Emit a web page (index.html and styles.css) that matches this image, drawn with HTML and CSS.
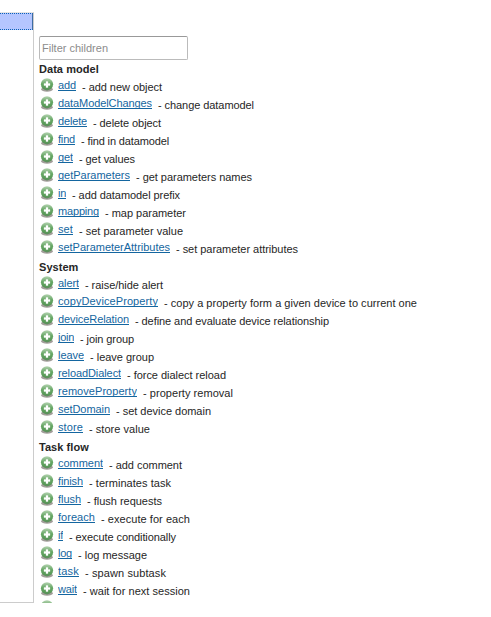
FILE: index.html
```
<!DOCTYPE html>
<html lang="en">
<head>
<meta charset="utf-8">
<title>Children</title>
<link rel="stylesheet" href="styles.css">
</head>
<body>
<svg class="defs" aria-hidden="true">
  <defs>
    <linearGradient id="ball" x1="0" y1="0" x2="0" y2="1">
      <stop offset="0" stop-color="#b4d3b1"/>
      <stop offset="0.45" stop-color="#68a866"/>
      <stop offset="0.8" stop-color="#5a9a59"/>
      <stop offset="1" stop-color="#5c8c5d"/>
    </linearGradient>
    <symbol id="plus" viewBox="0 0 14 15">
      <ellipse cx="7" cy="11.3" rx="5.8" ry="2.4" fill="#625b55" opacity="0.6"/>
      <circle cx="7" cy="6.3" r="6.1" fill="url(#ball)"/>
      <path d="M6 3.500h2v2h2v2H8v2H6v-2H4v-2h2z" fill="#fff" stroke="#fff" stroke-width="0.300"/>
    </symbol>
  </defs>
</svg>
<div class="layout">
  <div class="tree"><div class="selected"></div></div>
  <div class="children">
    <input class="filter" type="text" placeholder="Filter children">
    <div id="list"></div>
  </div>
</div>
<script src="list.js"></script>
</body>
</html>
```
FILE: styles.css
```
body {
  margin: 0;
  background: #fff;
  color: #262626;
  font: 11px/18px "Liberation Sans", Arial, sans-serif;
}
.defs {
  display: block;
  width: 0;
  height: 0;
}
.layout {
  display: flex;
  height: 591px;
  margin-top: 12px;
  overflow: hidden;
}
.tree {
  box-sizing: border-box;
  flex: none;
  width: 34px;
  border: 1px solid #ccc;
  border-top-color: #e4e4e4;
  border-left: 0;
}
.selected {
  box-sizing: border-box;
  height: 17px;
  background: #b5c6ff;
  border: 1px dotted #0b62b8;
  border-left: 0;
  border-right: 1px solid #3d6da5;
}
.children {
  flex: 1;
  padding: 24px 0 0 5px;
}
.filter {
  display: block;
  box-sizing: border-box;
  width: 149px;
  height: 24px;
  margin: 0;
  padding: 0 2px;
  border: 1px solid #bbb;
  border-top-color: #999;
  border-radius: 2px;
  outline: 0;
  font: 11px "Liberation Sans", Arial, sans-serif;
}
.filter::placeholder {
  color: #8c8c8c;
  opacity: 1;
  letter-spacing: 0;
}
.heading {
  height: 18px;
  margin: 0;
  font-size: 11px;
  font-weight: bold;
  letter-spacing: 0.05px;
}
.row {
  display: flex;
  height: 18px;
  white-space: nowrap;
}
.icon {
  flex: none;
  width: 14px;
  height: 15px;
  margin: 0 4px 0 1px;
}
.link {
  box-sizing: border-box;
  height: 13px;
  overflow: hidden;
  border-bottom: 1px solid #1466a0;
  color: #1466a0;
  line-height: 14px;
  text-decoration: none;
}
.desc {
  margin-left: 6px;
}
```
FILE: list.js
```
// Each row: name, description, name width, description width
const groups = [
  ["Data model", [
    ["add", "add new object", 18, 80],
    ["dataModelChanges", "change datamodel", 94, 96],
    ["delete", "delete object", 29, 68],
    ["find", "find in datamodel", 17, 88],
    ["get", "get values", 15, 56],
    ["getParameters", "get parameters names", 72, 116],
    ["in", "add datamodel prefix", 8, 108],
    ["mapping", "map parameter", 41, 81],
    ["set", "set parameter value", 15, 104],
    ["setParameterAttributes", "set parameter attributes", 112, 122]
  ]],
  ["System", [
    ["alert", "raise/hide alert", 21, 78],
    ["copyDeviceProperty", "copy a property form a given device to current one", 100, 253],
    ["deviceRelation", "define and evaluate device relationship", 71, 194],
    ["join", "join group", 16, 54],
    ["leave", "leave group", 26, 64],
    ["reloadDialect", "force dialect reload", 63, 99],
    ["removeProperty", "property removal", 79, 90],
    ["setDomain", "set device domain", 52, 95],
    ["store", "store value", 25, 61]
  ]],
  ["Task flow", [
    ["comment", "add comment", 45, 73],
    ["finish", "terminates task", 25, 82],
    ["flush", "flush requests", 23, 75],
    ["foreach", "execute for each", 37, 89],
    ["if", "execute conditionally", 5, 107],
    ["log", "log message", 14, 69],
    ["task", "spawn subtask", 21, 81],
    ["wait", "wait for next session", 19, 107],
    ["", "", 0, 0]
  ]]
];
const icon = '<svg class="icon"><use href="#plus"/></svg>';
document.getElementById("list").innerHTML = groups.map(([title, rows]) =>
  `<h3 class="heading">${title}</h3>` + rows.map(([name, text, nameWidth, textWidth]) =>
    `<div class="row">${icon}` +
    (name ? `<a class="link" href="#" data-width="${nameWidth}">${name}</a><span class="desc" data-width="${textWidth}">- ${text}</span>` : "") +
    "</div>").join("")
).join("");

// Track the letters so that each label fills its width
document.querySelectorAll("[data-width]").forEach(el => {
  const gap = el.dataset.width - el.getBoundingClientRect().width;
  el.style.letterSpacing = gap / el.textContent.length + "px";
});
```
